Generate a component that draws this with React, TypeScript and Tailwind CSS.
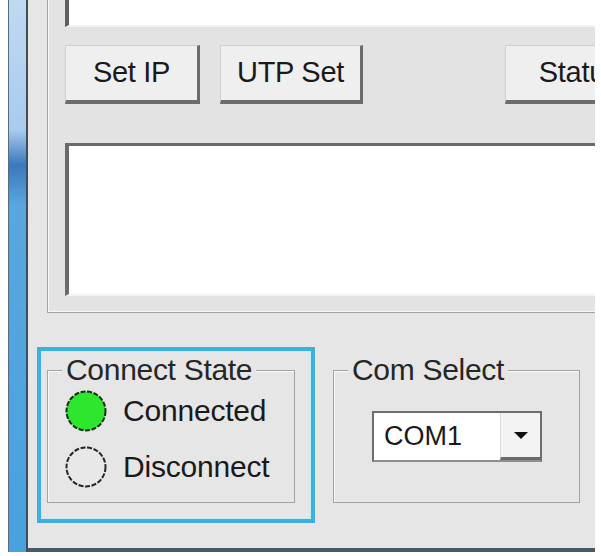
import React from "react";

const BOTON =
  "h-[59px] shrink-0 flex items-center justify-center text-[29px] tracking-[-0.3px] text-[#1a1a1a] bg-[#efefef] border-t border-l border-[#cfcfcf] border-r-[3px] border-b-[4px] border-r-[#6c6c6c] border-b-[#6c6c6c]";

function Led({ encendido }: { encendido: boolean }) {
  return (
    <svg width="42" height="42" viewBox="0 0 42 42" className="shrink-0">
      <circle
        cx="21"
        cy="21"
        r="19.5"
        fill={encendido ? "#2fe62f" : "#e8e8e8"}
        stroke={encendido ? "#173017" : "#262626"}
        strokeWidth="2"
        strokeDasharray="5 1.6"
      />
    </svg>
  );
}

function Grupo({ titulo, className, children }: { titulo: string; className: string; children: React.ReactNode }) {
  return (
    <fieldset
      className={`shrink-0 h-[147px] border border-[#a3a3a3] shadow-[inset_1px_1px_0_#f8f8f8] ${className}`}
    >
      <legend className="ml-[14px] px-[4px] bg-[#e6e6e6] text-[30px] leading-[28px] tracking-[-0.3px] text-[#262626]">
        {titulo}
      </legend>
      {children}
    </fieldset>
  );
}

export default function App() {
  return (
    <div className="w-[601px] h-[556px] bg-white overflow-hidden flex font-['Liberation_Sans',Arial,sans-serif]">
      {/* margen blanco */}
      <div className="w-2 shrink-0" />

      {/* borde de la ventana */}
      <div className="w-[20px] h-[552px] shrink-0 border-l border-l-[#5a6b7c] border-r-2 border-r-[#3f4c59] bg-[linear-gradient(to_bottom,#c0d9f2_0px,#a9cbee_130px,#3b78bc_165px,#5aa6de_205px,#47a2dd_100%)]" />

      {/* contenido */}
      <div className="w-[567px] h-[552px] shrink-0 flex flex-col bg-[#e6e6e6] border-b-4 border-[#4b5867]">
        {/* panel superior */}
        <div className="ml-[19px] w-[548px] h-[313px] shrink-0 flex flex-col overflow-hidden bg-[#e3e3e3] border-l border-b border-[#a2a2a2] shadow-[inset_1px_-1px_0_#f6f6f6]">
          <div className="ml-[17px] h-[27px] shrink-0 bg-white border-l-4 border-l-[#5e5e5e] border-b-2 border-b-[#f3f3f3]" />

          <div className="mt-[18px] flex">
            <button className={`ml-[17px] w-[135px] ${BOTON}`}>Set IP</button>
            <button className={`ml-[20px] w-[143px] ${BOTON}`}>UTP Set</button>
            <button className={`ml-[142px] w-[150px] ${BOTON}`}>Status</button>
          </div>

          <div className="mt-[39px] ml-[17px] h-[153px] shrink-0 bg-white border-t-[3px] border-l-4 border-[#6a6a6a] border-b-2 border-b-[#f4f4f4]" />
        </div>

        {/* fila inferior */}
        <div className="mt-[34px] ml-[9px] flex items-start">
          <div className="w-[278px] h-[176px] shrink-0 border-4 border-[#3db0de] shadow-[inset_0_0_0_1px_#cfeaf6] pl-[6px] pt-[5px]">
            <Grupo titulo="Connect State" className="w-[248px]">
              <div className="mt-[6px] ml-[17px] flex flex-col gap-[14px]">
                <div className="h-[42px] flex items-center gap-[16px]">
                  <Led encendido />
                  <span className="-mt-[2px] text-[30px] tracking-[-0.2px] text-[#1a1a1a]">Connected</span>
                </div>
                <div className="h-[42px] flex items-center gap-[16px]">
                  <Led encendido={false} />
                  <span className="-mt-[2px] text-[30px] tracking-[-0.2px] text-[#1a1a1a]">Disconnect</span>
                </div>
              </div>
            </Grupo>
          </div>

          <Grupo titulo="Com Select" className="ml-[18px] mt-[9px] w-[247px]">
            <div className="ml-[38px] mt-[27px] w-[170px] h-[51px] flex bg-white border-2 border-[#6e6e6e] border-b-[#8e8e8e]">
              <div className="flex-1 pl-[10px] flex items-center text-[27px] text-[#1a1a1a]">COM1</div>
              <div className="w-[40px] flex items-center justify-center bg-[#f3f3f3] border-l border-l-[#dcdcdc] border-b-[3px] border-b-[#6a6a6a]">
                <div className="w-0 h-0 border-x-[7px] border-x-transparent border-t-[7px] border-t-[#111]" />
              </div>
            </div>
          </Grupo>
        </div>
      </div>
    </div>
  );
}
